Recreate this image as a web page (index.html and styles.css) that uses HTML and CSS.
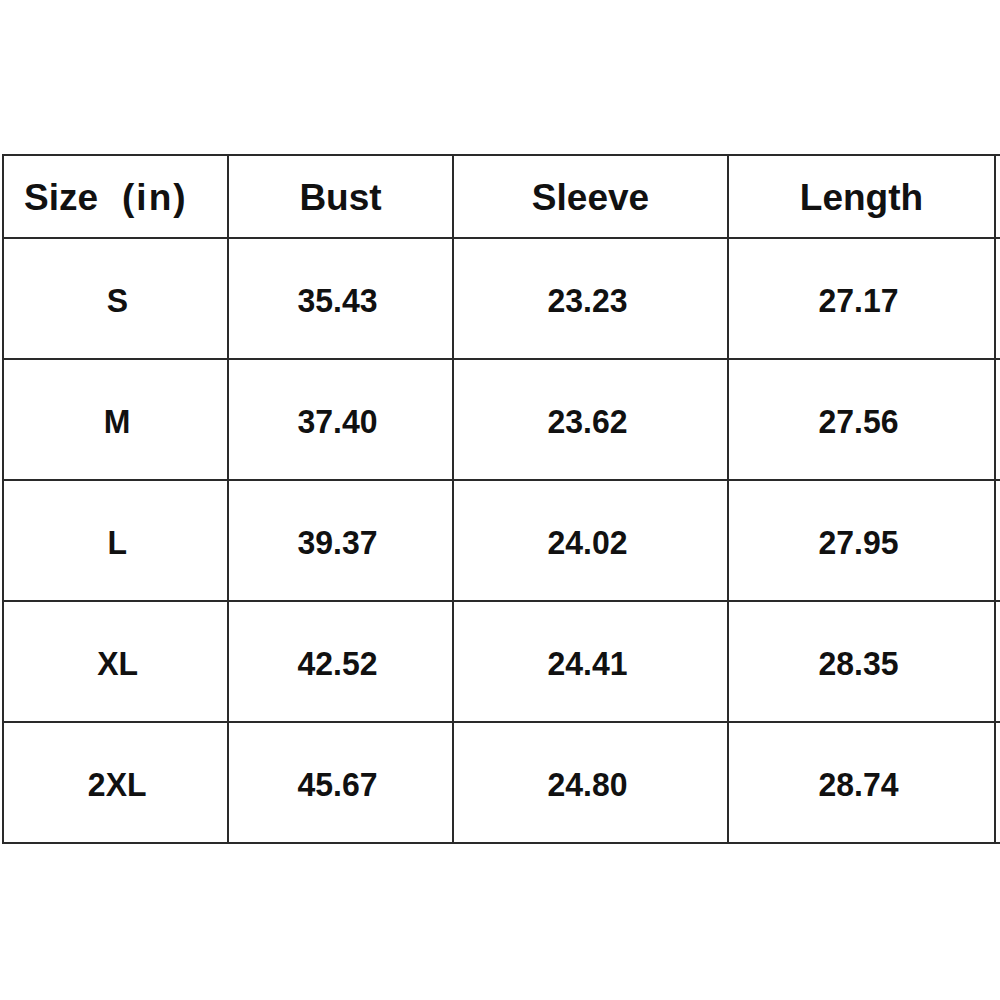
FILE: index.html
```html
<!DOCTYPE html>
<html>
<head>
<meta charset="utf-8">
<link rel="stylesheet" href="styles.css">
</head>
<body>
<div class="page">
  <table class="size-table">
    <colgroup>
      <col class="c1"><col class="c2"><col class="c3"><col class="c4"><col class="c5">
    </colgroup>
    <thead>
      <tr class="head">
        <th class="first">Size<span class="unit">(in)</span></th>
        <th>Bust</th>
        <th>Sleeve</th>
        <th>Length</th>
        <th></th>
      </tr>
    </thead>
    <tbody>
      <tr><td class="size"><span class="v">S</span></td><td><span class="v">35.43</span></td><td><span class="v">23.23</span></td><td><span class="v">27.17</span></td><td></td></tr>
      <tr><td class="size"><span class="v">M</span></td><td><span class="v">37.40</span></td><td><span class="v">23.62</span></td><td><span class="v">27.56</span></td><td></td></tr>
      <tr><td class="size"><span class="v">L</span></td><td><span class="v">39.37</span></td><td><span class="v">24.02</span></td><td><span class="v">27.95</span></td><td></td></tr>
      <tr><td class="size"><span class="v">XL</span></td><td><span class="v">42.52</span></td><td><span class="v">24.41</span></td><td><span class="v">28.35</span></td><td></td></tr>
      <tr><td class="size"><span class="v">2XL</span></td><td><span class="v">45.67</span></td><td><span class="v">24.80</span></td><td><span class="v">28.74</span></td><td></td></tr>
    </tbody>
  </table>
</div>
</body>
</html>
```
FILE: styles.css
```css
html, body {
  margin: 0;
  padding: 0;
  background: #ffffff;
  overflow: hidden;
}
.page {
  width: 1000px;
  height: 1000px;
  overflow: hidden;
  padding-top: 154px;
  padding-left: 2px;
  box-sizing: border-box;
}
.size-table {
  border-collapse: collapse;
  table-layout: fixed;
  width: 1292px;
  font-family: "Liberation Sans", Arial, sans-serif;
  color: #111;
}
.c1 { width: 225px; }
.c2 { width: 225px; }
.c3 { width: 275px; }
.c4 { width: 267px; }
.c5 { width: 300px; }
.size-table th,
.size-table td {
  border: 2px solid #2a2a2a;
  padding: 0;
  text-align: center;
  vertical-align: middle;
  white-space: nowrap;
}
.size-table th {
  font-size: 37px;
  font-weight: bold;
  padding-top: 2px;
}
.size-table th.first {
  text-align: left;
  padding-left: 20px;
}
.unit {
  margin-left: 24px;
  letter-spacing: 2px;
}
.size-table td {
  font-size: 34px;
  font-weight: bold;
  padding-top: 3px;
  padding-right: 6px;
}
.size-table td.size {
  padding-right: 0;
  padding-left: 4px;
}
.v {
  display: inline-block;
  transform: scaleX(0.94);
}
.head { height: 83px; }
tbody tr { height: 121px; }
```
